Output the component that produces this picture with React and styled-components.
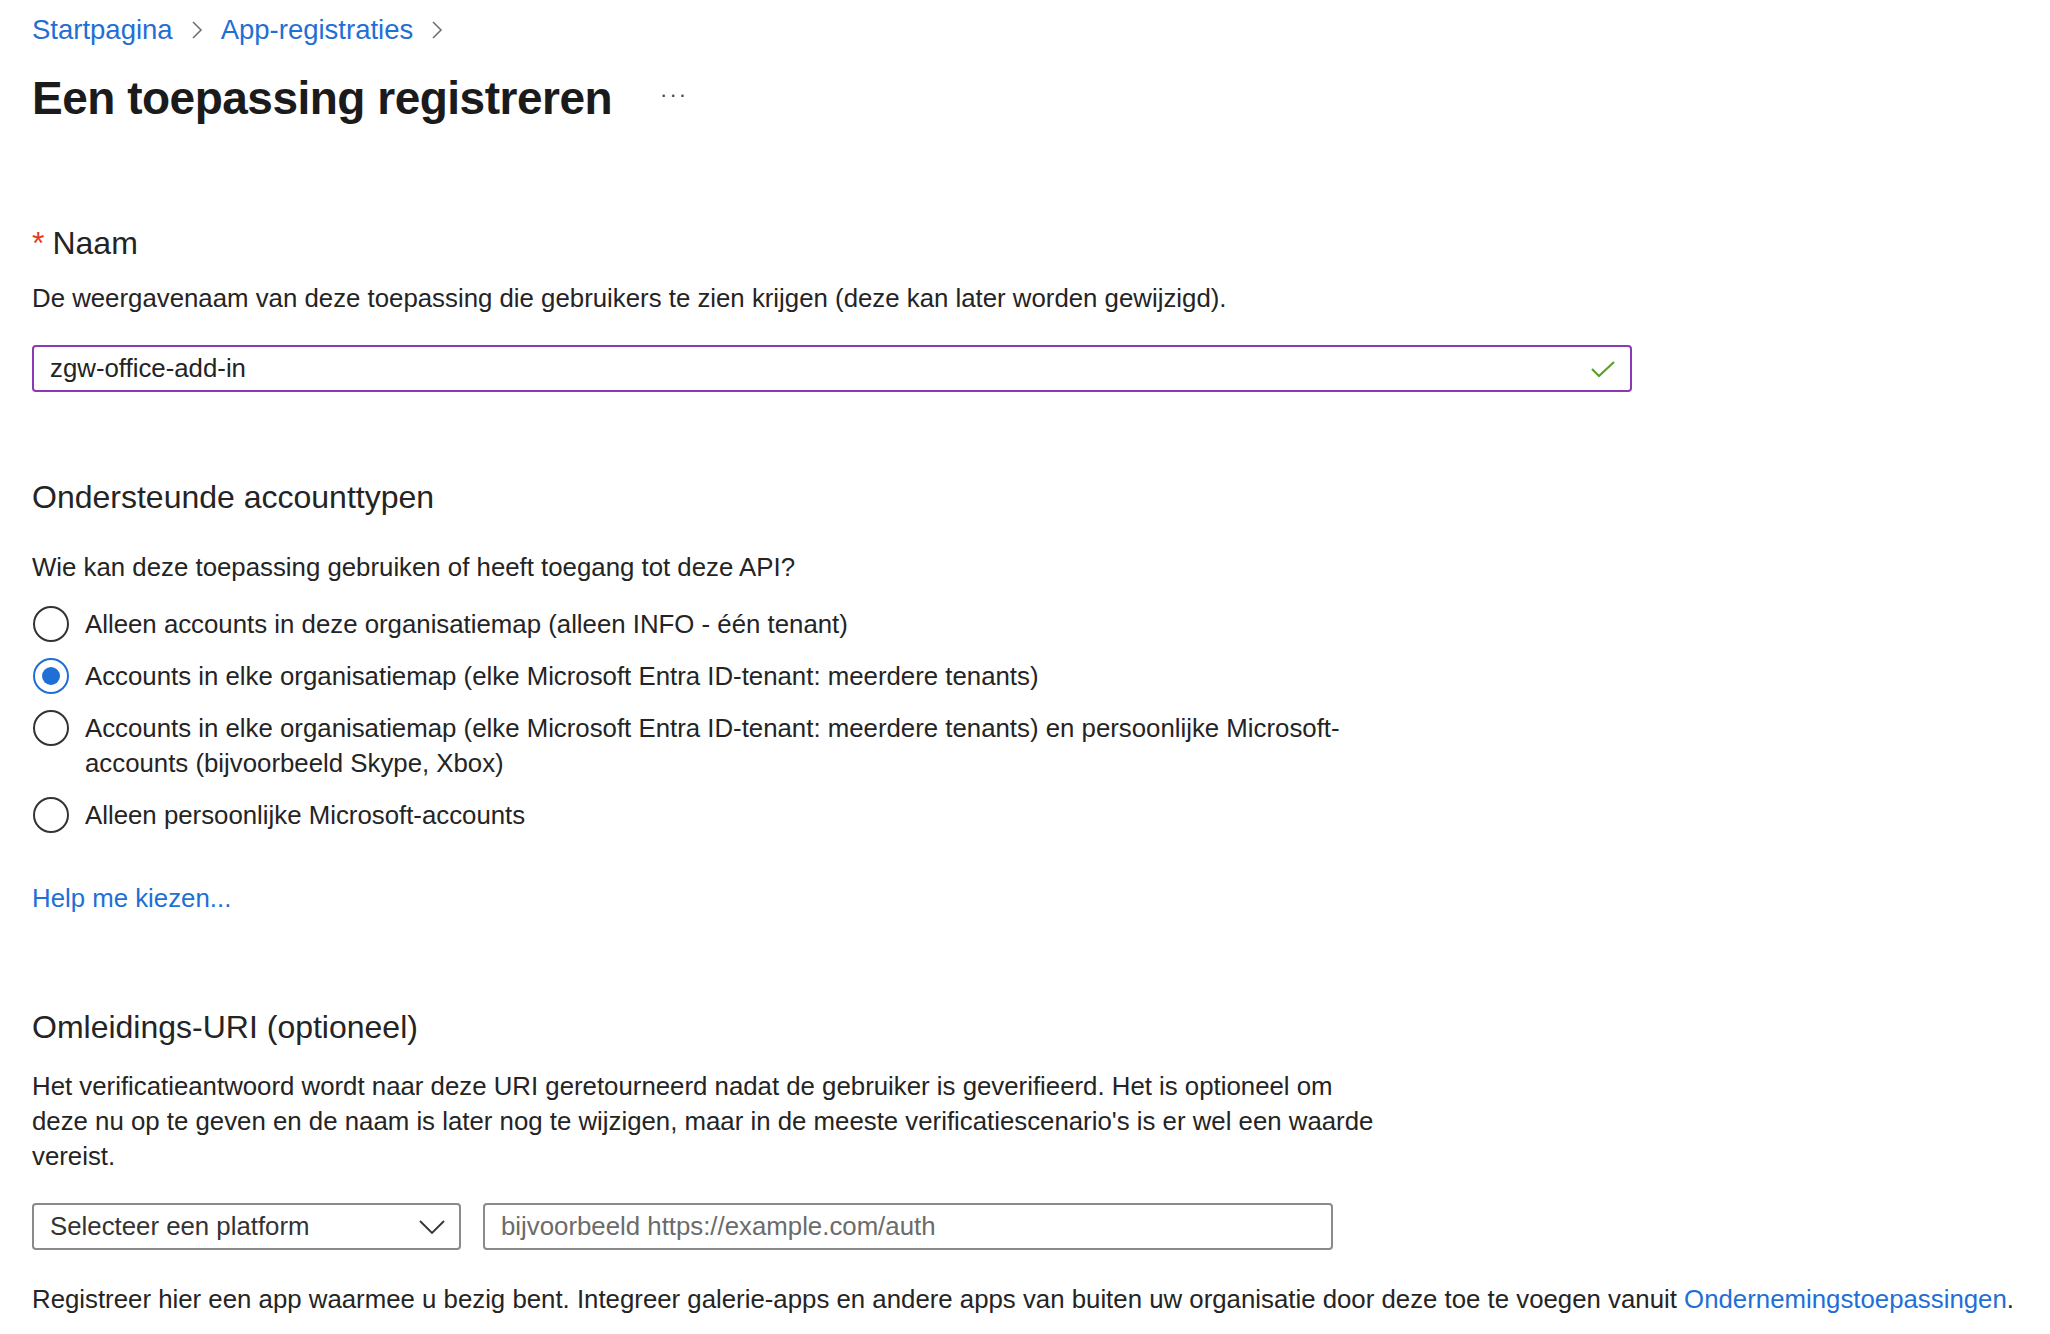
import React from 'react'
import styled, {createGlobalStyle} from 'styled-components'

const GlobalStyle = createGlobalStyle`
  html, body {
    margin: 0;
    padding: 0;
    background: #fff;
  }
  body {
    font-family: "Segoe UI", "Liberation Sans", Arial, sans-serif;
    color: #242424;
  }
`

const Page = styled.div`
  padding: 8px 32px 20px 32px;
  width: 2050px;
  box-sizing: border-box;
`

const Crumbs = styled.nav`
  display: flex;
  align-items: center;
  gap: 18px;
  height: 44px;
  font-size: 27.5px;
`

const CrumbLink = styled.a`
  color: #1f6fd6;
  text-decoration: none;
  cursor: pointer;
`

const Chevron = () => (
  <svg width="12" height="20" viewBox="0 0 12 20">
    <path d="M2 2l8 8-8 8" fill="none" stroke="#6b6b6b" strokeWidth="1.5" />
  </svg>
)

const TitleRow = styled.div`
  display: flex;
  align-items: center;
  gap: 48px;
  margin-top: 12px;
  height: 68px;
`

const Title = styled.h1`
  margin: 0;
  font-size: 46px;
  font-weight: 700;
  color: #1b1b1b;
  letter-spacing: -0.5px;
`

const More = styled.span`
  font-size: 22px;
  color: #444;
  letter-spacing: 2px;
  margin-top: -6px;
`

const Section = styled.section`
  margin-top: ${p => p.$top || 0}px;
  max-width: 1355px;
`

const Label = styled.h2`
  margin: 0;
  font-size: 32px;
  font-weight: 400;
  color: #242424;
  line-height: 40px;
`

const Required = styled.span`
  color: #e8391f;
  margin-right: 8px;
`

const Text = styled.p`
  margin: ${p => p.$top || 0}px 0 0 0;
  font-size: 25.8px;
  line-height: 35px;
  color: #242424;
`

const InputBox = styled.div`
  display: flex;
  align-items: center;
  justify-content: space-between;
  box-sizing: border-box;
  width: ${p => p.$width}px;
  height: 47px;
  padding: 0 14px 0 16px;
  border: ${p => (p.$focus ? '2px solid #8b3ab6' : '2px solid #8a8a8a')};
  border-radius: 4px;
  font-size: 25.8px;
  color: ${p => (p.$placeholder ? '#6b6b6b' : '#242424')};
  background: #fff;
`

const NameRow = styled.div`
  margin-top: 29px;
`

const RadioList = styled.div`
  display: flex;
  flex-direction: column;
  gap: 17px;
  margin-top: 22px;
`

const RadioRow = styled.label`
  display: flex;
  align-items: flex-start;
  gap: 16px;
  font-size: 25.8px;
  line-height: 35px;
  cursor: pointer;
`

const RadioCircle = styled.span`
  flex: 0 0 auto;
  box-sizing: border-box;
  width: 36px;
  height: 36px;
  border-radius: 50%;
  border: 2px solid ${p => (p.$checked ? '#1f6fd6' : '#333')};
  display: flex;
  align-items: center;
  justify-content: center;
  margin-left: 1px;
  margin-top: -1px;
  &::after {
    content: '';
    display: ${p => (p.$checked ? 'block' : 'none')};
    width: 18px;
    height: 18px;
    border-radius: 50%;
    background: #1f6fd6;
  }
`

const RadioText = styled.span`
  flex: 1;
`

const HelpLink = styled.a`
  display: inline-block;
  margin-top: 51px;
  font-size: 25.8px;
  color: #1f6fd6;
  cursor: pointer;
`

const UriRow = styled.div`
  display: flex;
  gap: 22px;
  margin-top: 29px;
`

const PlatformText = styled.span`
  color: #333;
`

const Footer = styled.p`
  margin: 32px 0 0 0;
  font-size: 25.8px;
  line-height: 35px;
  white-space: nowrap;
`

const Link = styled.a`
  color: #1f6fd6;
  cursor: pointer;
`

const Check = () => (
  <svg width="26" height="20" viewBox="0 0 26 20">
    <path d="M2 10l7 7L24 3" fill="none" stroke="#5c9f2a" strokeWidth="2.2" />
  </svg>
)

const Caret = () => (
  <svg width="26" height="16" viewBox="0 0 26 16">
    <path d="M1 2l12 12L25 2" fill="none" stroke="#333" strokeWidth="1.8" />
  </svg>
)

const options = [
  'Alleen accounts in deze organisatiemap (alleen INFO - één tenant)',
  'Accounts in elke organisatiemap (elke Microsoft Entra ID-tenant: meerdere tenants)',
  'Accounts in elke organisatiemap (elke Microsoft Entra ID-tenant: meerdere tenants) en persoonlijke Microsoft-accounts (bijvoorbeeld Skype, Xbox)',
  'Alleen persoonlijke Microsoft-accounts',
]

export default function App() {
  return (
    <>
      <GlobalStyle />
      <Page>
        <Crumbs>
          <CrumbLink>Startpagina</CrumbLink>
          <Chevron />
          <CrumbLink>App-registraties</CrumbLink>
          <Chevron />
        </Crumbs>
        <TitleRow>
          <Title>Een toepassing registreren</Title>
          <More>···</More>
        </TitleRow>

        <Section $top={91}>
          <Label><Required>*</Required>Naam</Label>
          <Text $top={18}>
            De weergavenaam van deze toepassing die gebruikers te zien krijgen (deze kan later worden gewijzigd).
          </Text>
        </Section>
        <NameRow>
          <InputBox $width={1600} $focus>
            <span>zgw-office-add-in</span>
            <Check />
          </InputBox>
        </NameRow>

        <Section $top={85}>
          <Label>Ondersteunde accounttypen</Label>
          <Text $top={33}>Wie kan deze toepassing gebruiken of heeft toegang tot deze API?</Text>
          <RadioList>
            {options.map((o, i) => (
              <RadioRow key={i}>
                <RadioCircle $checked={i === 1} />
                <RadioText>{o}</RadioText>
              </RadioRow>
            ))}
          </RadioList>
          <HelpLink>Help me kiezen...</HelpLink>
        </Section>

        <Section $top={94}>
          <Label>Omleidings-URI (optioneel)</Label>
          <Text $top={22}>
            Het verificatieantwoord wordt naar deze URI geretourneerd nadat de gebruiker is geverifieerd. Het is optioneel om deze nu op te geven en de naam is later nog te wijzigen, maar in de meeste verificatiescenario's is er wel een waarde vereist.
          </Text>
        </Section>
        <UriRow>
          <InputBox $width={429} $placeholder>
            <PlatformText>Selecteer een platform</PlatformText>
            <Caret />
          </InputBox>
          <InputBox $width={850} $placeholder>
            <span>bijvoorbeeld https://example.com/auth</span>
          </InputBox>
        </UriRow>
        <Footer>
          Registreer hier een app waarmee u bezig bent. Integreer galerie-apps en andere apps van buiten uw organisatie door deze toe te voegen vanuit <Link>Ondernemingstoepassingen</Link>.
        </Footer>
      </Page>
    </>
  )
}
